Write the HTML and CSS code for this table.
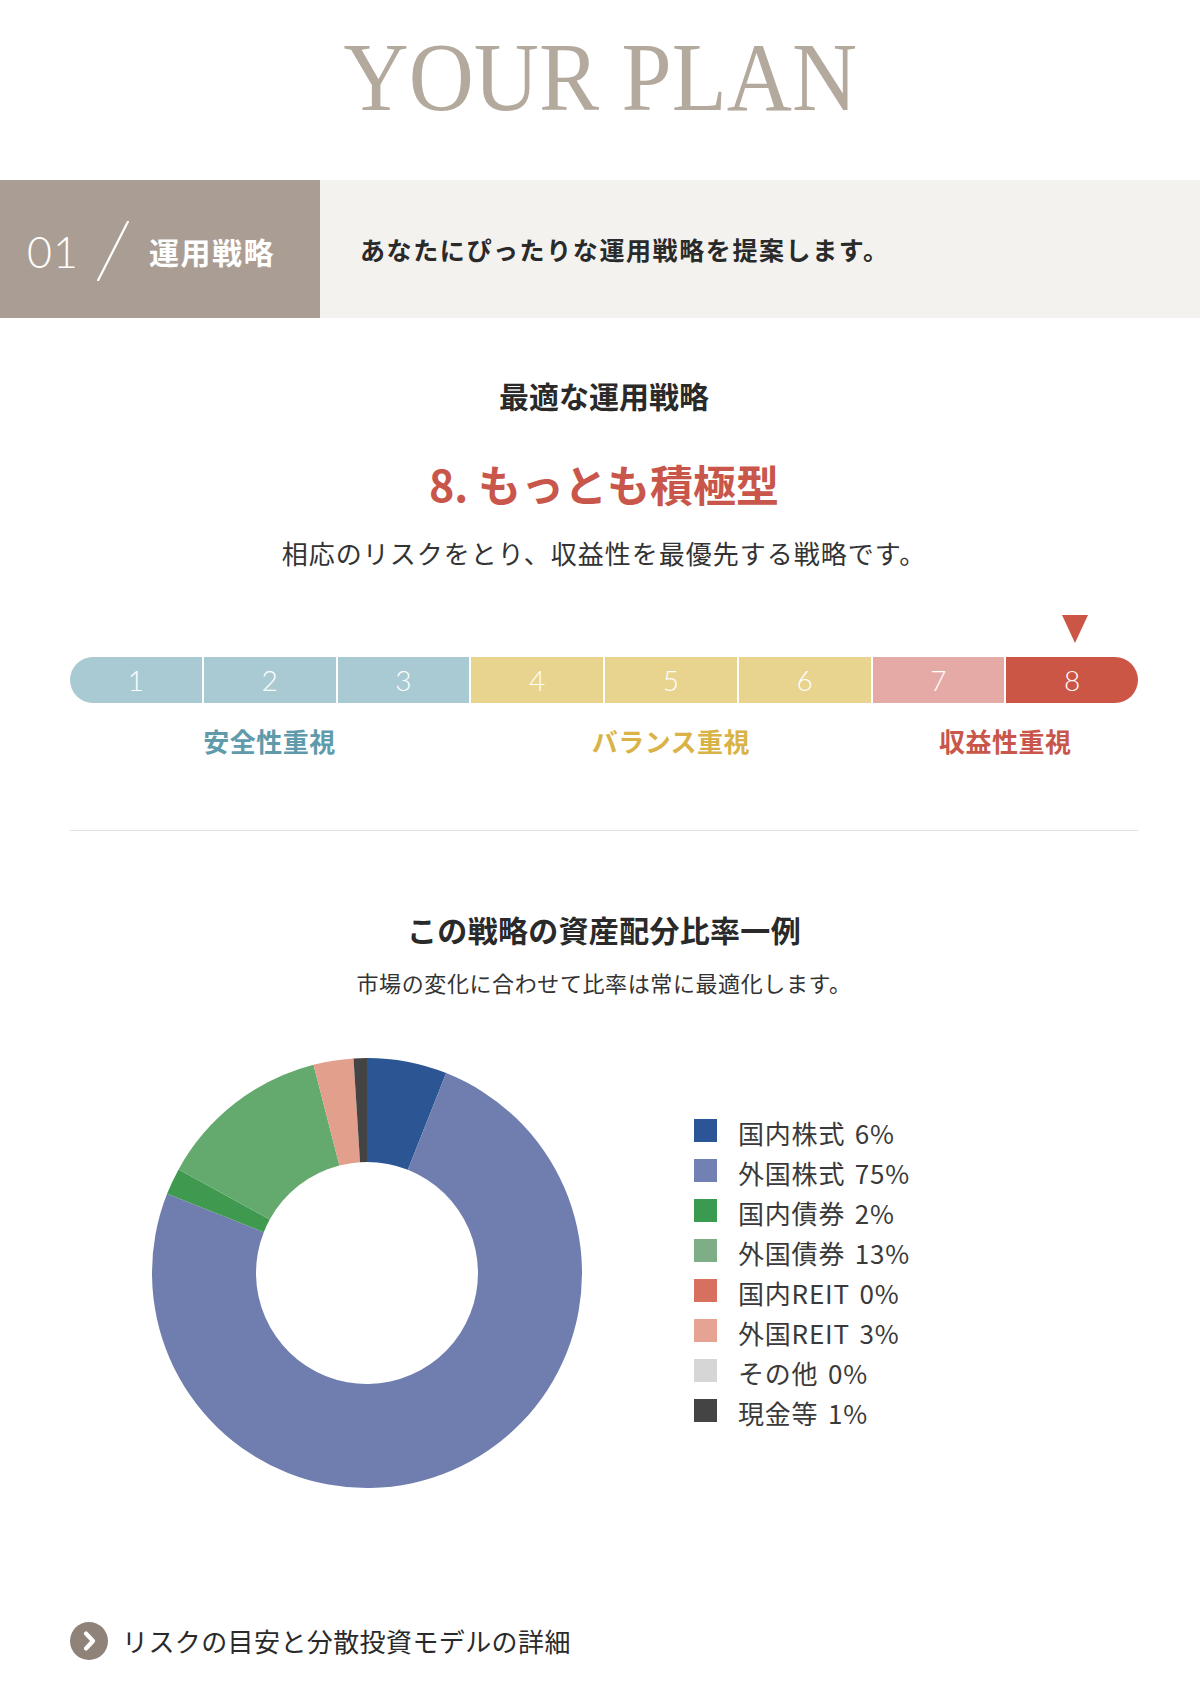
FILE: index.html
```html
<!DOCTYPE html>
<html lang="ja">
<head>
<meta charset="utf-8">
<title>YOUR PLAN</title>
<link rel="stylesheet" href="styles.css">
</head>
<body>
<header class="page-head">
  <h1 class="page-title">YOUR PLAN</h1>
</header>

<section class="step-band">
  <div class="step-label">
    <span class="step-num">01</span>
    <svg class="step-slash" width="32" height="60" viewBox="0 0 32 60" aria-hidden="true">
      <line x1="31" y1="0.5" x2="1" y2="59.5" stroke="#ffffff" stroke-width="2.2" stroke-linecap="round"/>
    </svg>
    <span class="step-name">運用戦略</span>
  </div>
  <div class="step-desc">あなたにぴったりな運用戦略を提案します。</div>
</section>

<main class="content">
  <section class="strategy">
    <h2 class="sec-title">最適な運用戦略</h2>
    <p class="strategy-name">8. もっとも積極型</p>
    <p class="strategy-desc">相応のリスクをとり、収益性を最優先する戦略です。</p>

    <div class="scale">
      <div class="scale-marker-row"><span class="marker"></span></div>
      <ol class="scale-bar">
        <li class="seg seg-safe">1</li>
        <li class="seg seg-safe">2</li>
        <li class="seg seg-safe">3</li>
        <li class="seg seg-balance">4</li>
        <li class="seg seg-balance">5</li>
        <li class="seg seg-balance">6</li>
        <li class="seg seg-return">7</li>
        <li class="seg seg-active">8</li>
      </ol>
      <div class="scale-labels">
        <span class="lbl lbl-safe">安全性重視</span>
        <span class="lbl lbl-balance">バランス重視</span>
        <span class="lbl lbl-return">収益性重視</span>
      </div>
    </div>
  </section>

  <hr class="divider">

  <section class="allocation">
    <h2 class="sec-title alloc-title">この戦略の資産配分比率一例</h2>
    <p class="alloc-note">市場の変化に合わせて比率は常に最適化します。</p>

    <div class="alloc-row">
      <svg class="donut" width="430" height="430" viewBox="0 0 430 430" aria-hidden="true">
        <path fill="#2c5593" d="M215,0 A215,215 0 0 1 294.15,15.10 L255.86,111.79 A111,111 0 0 0 215,104 Z"/>
        <path fill="#6f7eae" d="M294.15,15.10 A215,215 0 1 1 15.10,135.85 L111.79,174.14 A111,111 0 1 0 255.86,111.79 Z"/>
        <path fill="#3f9a50" d="M15.10,135.85 A215,215 0 0 1 26.59,111.42 L117.73,161.53 A111,111 0 0 0 111.79,174.14 Z"/>
        <path fill="#64a96e" d="M26.59,111.42 A215,215 0 0 1 161.53,6.76 L187.40,107.49 A111,111 0 0 0 117.73,161.53 Z"/>
        <path fill="#e29f8b" d="M161.53,6.76 A215,215 0 0 1 201.50,0.42 L208.03,104.22 A111,111 0 0 0 187.40,107.49 Z"/>
        <path fill="#444444" d="M201.50,0.42 A215,215 0 0 1 215,0 L215,104 A111,111 0 0 0 208.03,104.22 Z"/>
      </svg>

      <ul class="legend">
        <li class="legend-item"><span class="swatch sw-dstock"></span><span class="legend-text">国内株式 6%</span></li>
        <li class="legend-item"><span class="swatch sw-fstock"></span><span class="legend-text">外国株式 75%</span></li>
        <li class="legend-item"><span class="swatch sw-dbond"></span><span class="legend-text">国内債券 2%</span></li>
        <li class="legend-item"><span class="swatch sw-fbond"></span><span class="legend-text">外国債券 13%</span></li>
        <li class="legend-item"><span class="swatch sw-dreit"></span><span class="legend-text">国内REIT 0%</span></li>
        <li class="legend-item"><span class="swatch sw-freit"></span><span class="legend-text">外国REIT 3%</span></li>
        <li class="legend-item"><span class="swatch sw-other"></span><span class="legend-text">その他 0%</span></li>
        <li class="legend-item"><span class="swatch sw-cash"></span><span class="legend-text">現金等 1%</span></li>
      </ul>
    </div>
  </section>

  <a class="detail-link" href="#">
    <svg class="detail-icon" width="38" height="38" viewBox="0 0 38 38" aria-hidden="true">
      <circle cx="19" cy="19" r="19" fill="#8f8279"/>
      <polyline points="16,11.5 23,19 16,26.5" fill="none" stroke="#ffffff" stroke-width="4.2" stroke-linecap="round" stroke-linejoin="round"/>
    </svg>
    <span class="detail-text">リスクの目安と分散投資モデルの詳細</span>
  </a>
</main>
</body>
</html>
```

FILE: styles.css
```css
html, body {
  margin: 0;
  padding: 0;
  background: #ffffff;
}

body {
  width: 1200px;
  font-family: "Noto Sans CJK JP", "Noto Sans", sans-serif;
  color: #2a2a2a;
}

/* ---------- header ---------- */
.page-head {
  padding-top: 28px;
  text-align: center;
}

.page-title {
  margin: 0;
  font-family: "Liberation Serif", "DejaVu Serif", serif;
  font-weight: 400;
  font-size: 98px;
  line-height: 98px;
  color: #b3a99d;
  letter-spacing: 0;
  transform: scaleX(0.92);
  transform-origin: 604px 50%;
}

/* ---------- step band ---------- */
.step-band {
  display: flex;
  margin-top: 54px;
  height: 138px;
}

.step-label {
  width: 320px;
  flex: 0 0 320px;
  background: #aa9e94;
  display: flex;
  align-items: center;
  padding: 4px 0 0 27px;
  box-sizing: border-box;
  color: #ffffff;
}

.step-num {
  font-family: "Lato", "Noto Sans", sans-serif;
  font-weight: 300;
  font-size: 43px;
  line-height: 1;
  letter-spacing: 1px;
}

.step-slash {
  display: block;
  margin-left: 18px;
}

.step-name {
  margin-left: 20px;
  font-weight: 700;
  font-size: 30px;
  line-height: 1;
  letter-spacing: 1.5px;
}

.step-desc {
  flex: 1;
  background: #f3f2ee;
  display: flex;
  align-items: center;
  padding-left: 40px;
  font-weight: 700;
  font-size: 25px;
  letter-spacing: 1.6px;
  color: #2a2a2a;
}

/* ---------- content ---------- */
.content {
  margin: 0 62px 0 70px;
}

.strategy {
  padding-top: 57px;
  text-align: center;
}

.sec-title {
  margin: 0;
  font-size: 30px;
  line-height: 40px;
  font-weight: 700;
  color: #2a2a2a;
}

.strategy-name {
  margin: 38px 0 0;
  font-size: 43px;
  line-height: 60px;
  font-weight: 700;
  letter-spacing: 0;
  color: #c9564a;
}

.strategy-desc {
  margin: 22px 0 0;
  font-size: 26px;
  line-height: 36px;
  letter-spacing: 1px;
  color: #333333;
}

/* ---------- risk scale ---------- */
.scale {
  margin-top: 44px;
}

.scale-marker-row,
.scale-bar,
.scale-labels {
  display: grid;
  grid-template-columns: repeat(8, 1fr);
  column-gap: 2px;
}

.scale-marker-row {
  height: 28px;
  margin-bottom: 14px;
}

.marker {
  grid-column: 8;
  justify-self: center;
  margin-left: 6px;
  width: 0;
  height: 0;
  border-left: 13px solid transparent;
  border-right: 13px solid transparent;
  border-top: 28px solid #cc5646;
}

.scale-bar {
  list-style: none;
  margin: 0;
  padding: 0;
  height: 46px;
  border-radius: 23px;
  overflow: hidden;
}

.seg {
  font-family: "Lato", "Noto Sans", sans-serif;
  font-weight: 300;
  font-size: 28px;
  line-height: 46px;
  color: #ffffff;
  text-align: center;
}

.seg-safe { background: #a9cad2; }
.seg-balance { background: #e8d38f; }
.seg-return { background: #e6aaa6; }
.seg-active { background: #cc5646; }

.scale-labels {
  margin-top: 20px;
}

.lbl {
  font-size: 26px;
  line-height: 36px;
  font-weight: 700;
  letter-spacing: 0.5px;
  text-align: center;
}

.lbl-safe { grid-column: 1 / 4; color: #609bab; }
.lbl-balance { grid-column: 4 / 7; color: #d9b347; }
.lbl-return { grid-column: 7 / 9; color: #c9564a; }

.divider {
  margin: 71px 0 0;
  border: 0;
  border-top: 1px solid #e2e2e2;
  height: 0;
}

/* ---------- allocation ---------- */
.allocation {
  text-align: center;
}

.alloc-title {
  margin-top: 78px;
  letter-spacing: 0.3px;
}

.alloc-note {
  margin: 18px 0 0;
  font-size: 22px;
  line-height: 30px;
  letter-spacing: 0.6px;
  color: #333333;
}

.alloc-row {
  display: flex;
  align-items: center;
  margin-top: 61px;
  padding-left: 82px;
  gap: 112px;
  text-align: left;
}

.donut {
  display: block;
  flex: 0 0 430px;
}

.legend {
  list-style: none;
  margin: 0;
  padding: 0;
}

.legend-item {
  display: flex;
  align-items: center;
  height: 40px;
}

.swatch {
  width: 23px;
  height: 23px;
  flex: 0 0 23px;
  margin-top: -6px;
}

.legend-text {
  margin-left: 21px;
  font-size: 26px;
  line-height: 40px;
  letter-spacing: 0.8px;
  word-spacing: 3px;
  color: #3a3a3a;
}

.sw-dstock { background: #2b5597; }
.sw-fstock { background: #7181b3; }
.sw-dbond { background: #3a9a50; }
.sw-fbond { background: #7dae86; }
.sw-dreit { background: #d7705e; }
.sw-freit { background: #e6a292; }
.sw-other { background: #d6d6d6; }
.sw-cash { background: #444444; }

/* ---------- detail link ---------- */
.detail-link {
  display: flex;
  align-items: center;
  margin-top: 133px;
  height: 40px;
  gap: 14px;
  text-decoration: none;
  color: #2a2a2a;
}

.detail-icon {
  display: block;
  flex: 0 0 38px;
}

.detail-text {
  font-size: 26px;
  line-height: 40px;
  letter-spacing: 0.4px;
}
```
